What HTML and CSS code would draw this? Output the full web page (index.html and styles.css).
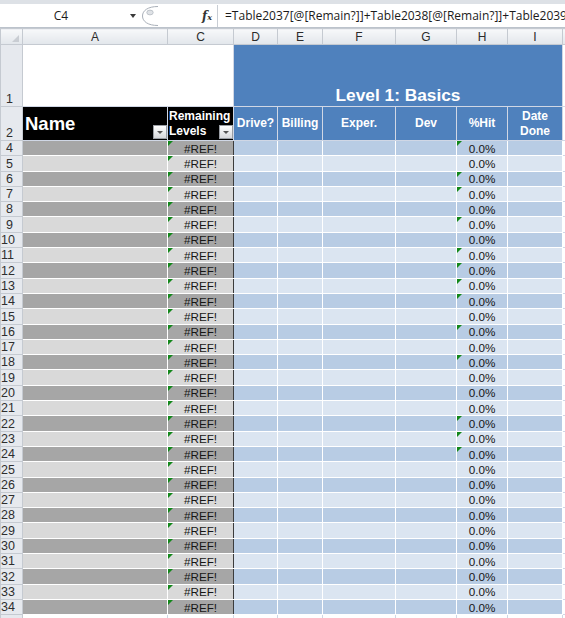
FILE: index.html
```html
<!DOCTYPE html>
<html lang="en">
<head>
    <meta charset="UTF-8">
    <title>Levels Sheet</title>
    <link rel="stylesheet" href="styles.css">
</head>
<body>
    <div class="formula-bar">
        <div class="name-box">C4</div>
        <div class="name-arrow"></div>
        <svg class="expand" width="18" height="22" viewBox="0 0 18 22">
            <path d="M17 1.5 C7 1.5 1.5 5.5 1.5 11 C1.5 16.5 7 20.5 17 20.5" fill="none" stroke="#a9b0b9" stroke-width="1"/>
            <ellipse cx="9" cy="7.5" rx="3.2" ry="2.4" fill="#dfe2e6" stroke="#b4bac2" stroke-width="0.8"/>
        </svg>
        <div class="fx"><i>f</i><span>x</span></div>
        <div class="divider"></div>
        <div class="formula">=Table2037[@[Remain?]]+Table2038[@[Remain?]]+Table2039[@[Remain?]]</div>
    </div>

    <table class="sheet">
        <colgroup>
            <col class="w-row"><col class="w-a"><col class="w-c"><col class="w-d"><col class="w-e">
            <col class="w-f"><col class="w-g"><col class="w-h"><col class="w-i"><col class="w-j">
        </colgroup>
        <thead>
            <tr class="col-head">
                <th class="corner"><span class="corner-mark"></span></th>
                <th>A</th><th>C</th><th>D</th><th>E</th><th>F</th><th>G</th><th>H</th><th>I</th><th></th>
            </tr>
        </thead>
        <tbody>
            <tr class="row-title">
                <th>1</th>
                <td colspan="2" class="blank"></td>
                <td colspan="6" class="level">Level 1: Basics</td>
                <td class="edge"></td>
            </tr>
            <tr class="row-head">
                <th>2</th>
                <td class="name-head"><div class="hcell">Name<span class="filter"></span></div></td>
                <td class="rem-head"><div class="hcell">Remaining<br>Levels<span class="filter"></span></div></td>
                <td class="hd">Drive?</td>
                <td class="hd">Billing</td>
                <td class="hd">Exper.</td>
                <td class="hd">Dev</td>
                <td class="hd">%Hit</td>
                <td class="hd">Date<br>Done</td>
                <td class="edge"></td>
            </tr>
            <tr class="dark"><th>4</th><td></td><td class="rem tri">#REF!</td><td></td><td></td><td></td><td></td><td class="pct tri">0.0%</td><td></td><td class="edge"></td></tr>
            <tr class="light"><th>5</th><td></td><td class="rem tri">#REF!</td><td></td><td></td><td></td><td></td><td class="pct">0.0%</td><td></td><td class="edge"></td></tr>
            <tr class="dark"><th>6</th><td></td><td class="rem tri">#REF!</td><td></td><td></td><td></td><td></td><td class="pct tri">0.0%</td><td></td><td class="edge"></td></tr>
            <tr class="light"><th>7</th><td></td><td class="rem tri">#REF!</td><td></td><td></td><td></td><td></td><td class="pct tri">0.0%</td><td></td><td class="edge"></td></tr>
            <tr class="dark"><th>8</th><td></td><td class="rem tri">#REF!</td><td></td><td></td><td></td><td></td><td class="pct">0.0%</td><td></td><td class="edge"></td></tr>
            <tr class="light"><th>9</th><td></td><td class="rem tri">#REF!</td><td></td><td></td><td></td><td></td><td class="pct tri">0.0%</td><td></td><td class="edge"></td></tr>
            <tr class="dark"><th>10</th><td></td><td class="rem tri">#REF!</td><td></td><td></td><td></td><td></td><td class="pct">0.0%</td><td></td><td class="edge"></td></tr>
            <tr class="light"><th>11</th><td></td><td class="rem tri">#REF!</td><td></td><td></td><td></td><td></td><td class="pct tri">0.0%</td><td></td><td class="edge"></td></tr>
            <tr class="dark"><th>12</th><td></td><td class="rem tri">#REF!</td><td></td><td></td><td></td><td></td><td class="pct tri">0.0%</td><td></td><td class="edge"></td></tr>
            <tr class="light"><th>13</th><td></td><td class="rem tri">#REF!</td><td></td><td></td><td></td><td></td><td class="pct tri">0.0%</td><td></td><td class="edge"></td></tr>
            <tr class="dark"><th>14</th><td></td><td class="rem tri">#REF!</td><td></td><td></td><td></td><td></td><td class="pct tri">0.0%</td><td></td><td class="edge"></td></tr>
            <tr class="light"><th>15</th><td></td><td class="rem tri">#REF!</td><td></td><td></td><td></td><td></td><td class="pct">0.0%</td><td></td><td class="edge"></td></tr>
            <tr class="dark"><th>16</th><td></td><td class="rem tri">#REF!</td><td></td><td></td><td></td><td></td><td class="pct tri">0.0%</td><td></td><td class="edge"></td></tr>
            <tr class="light"><th>17</th><td></td><td class="rem tri">#REF!</td><td></td><td></td><td></td><td></td><td class="pct">0.0%</td><td></td><td class="edge"></td></tr>
            <tr class="dark"><th>18</th><td></td><td class="rem tri">#REF!</td><td></td><td></td><td></td><td></td><td class="pct tri">0.0%</td><td></td><td class="edge"></td></tr>
            <tr class="light"><th>19</th><td></td><td class="rem tri">#REF!</td><td></td><td></td><td></td><td></td><td class="pct">0.0%</td><td></td><td class="edge"></td></tr>
            <tr class="dark"><th>20</th><td></td><td class="rem tri">#REF!</td><td></td><td></td><td></td><td></td><td class="pct">0.0%</td><td></td><td class="edge"></td></tr>
            <tr class="light"><th>21</th><td></td><td class="rem tri">#REF!</td><td></td><td></td><td></td><td></td><td class="pct">0.0%</td><td></td><td class="edge"></td></tr>
            <tr class="dark"><th>22</th><td></td><td class="rem tri">#REF!</td><td></td><td></td><td></td><td></td><td class="pct tri">0.0%</td><td></td><td class="edge"></td></tr>
            <tr class="light"><th>23</th><td></td><td class="rem tri">#REF!</td><td></td><td></td><td></td><td></td><td class="pct tri">0.0%</td><td></td><td class="edge"></td></tr>
            <tr class="dark"><th>24</th><td></td><td class="rem tri">#REF!</td><td></td><td></td><td></td><td></td><td class="pct tri">0.0%</td><td></td><td class="edge"></td></tr>
            <tr class="light"><th>25</th><td></td><td class="rem tri">#REF!</td><td></td><td></td><td></td><td></td><td class="pct">0.0%</td><td></td><td class="edge"></td></tr>
            <tr class="dark"><th>26</th><td></td><td class="rem tri">#REF!</td><td></td><td></td><td></td><td></td><td class="pct">0.0%</td><td></td><td class="edge"></td></tr>
            <tr class="light"><th>27</th><td></td><td class="rem tri">#REF!</td><td></td><td></td><td></td><td></td><td class="pct">0.0%</td><td></td><td class="edge"></td></tr>
            <tr class="dark"><th>28</th><td></td><td class="rem tri">#REF!</td><td></td><td></td><td></td><td></td><td class="pct">0.0%</td><td></td><td class="edge"></td></tr>
            <tr class="light"><th>29</th><td></td><td class="rem tri">#REF!</td><td></td><td></td><td></td><td></td><td class="pct">0.0%</td><td></td><td class="edge"></td></tr>
            <tr class="dark"><th>30</th><td></td><td class="rem tri">#REF!</td><td></td><td></td><td></td><td></td><td class="pct">0.0%</td><td></td><td class="edge"></td></tr>
            <tr class="light"><th>31</th><td></td><td class="rem tri">#REF!</td><td></td><td></td><td></td><td></td><td class="pct">0.0%</td><td></td><td class="edge"></td></tr>
            <tr class="dark"><th>32</th><td></td><td class="rem tri">#REF!</td><td></td><td></td><td></td><td></td><td class="pct">0.0%</td><td></td><td class="edge"></td></tr>
            <tr class="light"><th>33</th><td></td><td class="rem tri">#REF!</td><td></td><td></td><td></td><td></td><td class="pct">0.0%</td><td></td><td class="edge"></td></tr>
            <tr class="dark"><th>34</th><td></td><td class="rem tri">#REF!</td><td></td><td></td><td></td><td></td><td class="pct">0.0%</td><td></td><td class="edge"></td></tr>
            <tr class="empty"><th></th><td></td><td></td><td></td><td></td><td></td><td></td><td></td><td></td><td class="edge"></td></tr>
        </tbody>
    </table>
</body>
</html>
```

FILE: styles.css
```css
* {
    margin: 0;
    padding: 0;
    box-sizing: border-box;
}

body {
    width: 565px;
    height: 618px;
    overflow: hidden;
    background-color: #fff;
    font-family: "Liberation Sans", Arial, sans-serif;
}

/* formula bar */
.formula-bar {
    display: flex;
    align-items: center;
    height: 28px;
    border-top: 4px solid #dde1e6;
    border-bottom: 1px solid #bcc3cc;
    font-family: "Open Sans", sans-serif;
    font-size: 12px;
    color: #1b1b1b;
}

.formula-bar > * {
    flex-shrink: 0;
}

.name-box {
    width: 122px;
    text-align: center;
}

.name-arrow {
    width: 0;
    height: 0;
    margin-left: 8px;
    border-left: 3.5px solid transparent;
    border-right: 3.5px solid transparent;
    border-top: 4px solid #3a3a3a;
}

.expand {
    margin-left: 5px;
}

.fx {
    width: 14px;
    margin-left: 43px;
    font-family: "DejaVu Serif", serif;
    font-size: 12px;
    font-weight: bold;
    color: #333;
}

.fx span {
    font-size: 8px;
    font-style: italic;
}

.divider {
    width: 1px;
    height: 22px;
    margin-left: 1px;
    background-color: #c8cdd4;
}

.formula-bar .formula {
    flex: 1 1 0;
    min-width: 0;
    margin-left: 7px;
    white-space: nowrap;
    overflow: hidden;
}

/* sheet grid */
.sheet {
    border-collapse: collapse;
    table-layout: fixed;
    width: 565px;
    font-size: 12px;
}

.w-row { width: 22px; }
.w-a { width: 145px; }
.w-c { width: 66px; }
.w-d { width: 44px; }
.w-e { width: 45px; }
.w-f { width: 73px; }
.w-g { width: 61px; }
.w-h { width: 51px; }
.w-i { width: 55px; }
.w-j { width: 3px; }

.sheet th,
.sheet td {
    padding: 0;
    border: 1px solid #d0d7e5;
    white-space: nowrap;
    overflow: hidden;
}

.col-head th {
    height: 16px;
    background: linear-gradient(#f7f8fa, #e2e6eb);
    border-color: #c5cad1;
    font-weight: normal;
    color: #2b2b2b;
    font-size: 12px;
}

.corner-mark {
    display: block;
    width: 0;
    height: 0;
    margin: 4px 3px 0 auto;
    border-left: 7px solid transparent;
    border-bottom: 7px solid #c9cdd3;
}

.sheet tbody th {
    background-color: #e6e9ee;
    border-color: #c5cad1;
    font-weight: normal;
    font-size: 12.5px;
    color: #2e2e2e;
    text-align: right;
    padding-right: 9px;
    vertical-align: bottom;
    line-height: 14px;
}

/* title row */
.row-title {
    height: 62px;
}

.blank {
    background-color: #fff;
}

.level {
    background-color: #4f81bd;
    border-color: #4f81bd;
    border-bottom: 2px solid #000;
    color: #fff;
    font-weight: bold;
    font-size: 17.3px;
    text-align: center;
    vertical-align: bottom;
    padding-bottom: 1px;
}

.edge {
    background-color: #fff;
}

.row-title .edge {
    border-left: 1px solid #000;
}

/* header row */
.row-head {
    height: 34px;
}

.name-head,
.rem-head {
    background-color: #000;
    border-color: #000;
    color: #fff;
    font-weight: bold;
}

.rem-head {
    border-left: 1px solid #d9d9d9;
}

.hcell {
    position: relative;
    height: 32px;
    display: flex;
    align-items: center;
}

.name-head .hcell {
    padding-left: 2px;
    font-size: 18.5px;
}

.rem-head .hcell {
    padding-left: 1px;
    font-size: 12px;
    line-height: 15px;
}

.filter {
    position: absolute;
    right: 0;
    bottom: 1px;
    width: 14px;
    height: 14px;
    background: linear-gradient(#ffffff, #d6d8db);
    border: 1px solid #9a9ea4;
}

.filter::after {
    content: "";
    position: absolute;
    left: 3px;
    top: 5px;
    border-left: 3px solid transparent;
    border-right: 3px solid transparent;
    border-top: 3px solid #555;
}

.hd {
    background-color: #4f81bd;
    border: 2px solid #000;
    color: #fff;
    font-weight: bold;
    text-align: center;
    line-height: 15px;
}

/* data rows */
.dark,
.light {
    height: 15.3px;
}

.dark td,
.light td {
    border-color: #fff;
    color: #161616;
    font-size: 11.7px;
    line-height: 13px;
    text-align: center;
}

.dark td { background-color: #b8cce4; }
.light td { background-color: #dbe5f1; }

.dark td:nth-of-type(1),
.dark td:nth-of-type(2) { background-color: #a6a6a6; }
.light td:nth-of-type(1),
.light td:nth-of-type(2) { background-color: #d9d9d9; }

.sheet .rem {
    border-right: 1px solid #3c3c3c;
}

.sheet .edge {
    background-color: #fff;
    border-color: #d0d7e5;
}

.tri {
    position: relative;
}

.tri::before {
    content: "";
    position: absolute;
    top: 0;
    left: 0;
    border-top: 5px solid #12871a;
    border-right: 5px solid transparent;
}

.empty {
    height: 15px;
}
```
